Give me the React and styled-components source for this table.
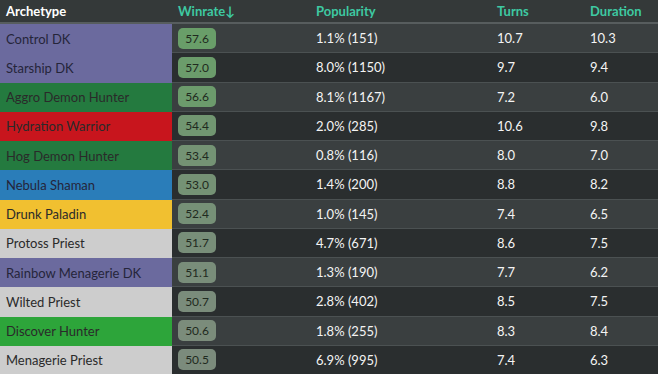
import styled, { createGlobalStyle } from "styled-components";

const GlobalStyle = createGlobalStyle`
    body {
        margin: 0;
        background: #2b2f30;
        font-family: Lato, "Open Sans", sans-serif;
    }
`

const Table = styled.div`
    width: 658px;
    height: 374px;
    overflow: hidden;
    background: #2b2f30;
    display: flex;
    flex-direction: column;
`

const Row = styled.div`
    display: grid;
    grid-template-columns: 172px 138px 181px 93px 74px;
    height: 29.25px;
    flex-shrink: 0;
    background: ${p => p.$odd ? '#3a3f40' : '#2a2e2f'};
    color: #f4f4f4;
    font-size: 13px;
`

const HeadRow = styled(Row)`
    height: 24px;
    box-sizing: border-box;
    background: #343939;
    border-bottom: 2px solid #575d5e;
    font-weight: 700;
`

const Cell = styled.div`
    display: flex;
    align-items: center;
    padding-left: 6px;
    white-space: nowrap;
    box-sizing: border-box;
    border-bottom: 1px solid #4b5152;
`

const HeadCell = styled.div`
    display: flex;
    align-items: center;
    padding-left: 6px;
    padding-bottom: 1px;
    color: ${p => p.$main ? '#ffffff' : '#3ec9a2'};
`

const NameCell = styled(Cell)`
    border-bottom: none;
    background: ${p => p.$color};
    color: ${p => p.$dark ? '#25253a' : '#2a2a2a'};
`

const Badge = styled.span`
    display: inline-flex;
    align-items: center;
    justify-content: center;
    width: 38px;
    height: 21px;
    border-radius: 5px;
    font-size: 12px;
    color: #1f2a20;
    background: ${p => p.$bg};
`

const classColors = {
    dk: '#6b6a9e',
    dh: '#247a3f',
    warrior: '#c8151d',
    shaman: '#2a7db9',
    paladin: '#f1c030',
    priest: '#cdcdcd',
    hunter: '#2da53a',
}

const rows = [
    ['Control DK', 'dk', 57.6, '1.1% (151)', '10.7', '10.3'],
    ['Starship DK', 'dk', 57.0, '8.0% (1150)', '9.7', '9.4'],
    ['Aggro Demon Hunter', 'dh', 56.6, '8.1% (1167)', '7.2', '6.0'],
    ['Hydration Warrior', 'warrior', 54.4, '2.0% (285)', '10.6', '9.8'],
    ['Hog Demon Hunter', 'dh', 53.4, '0.8% (116)', '8.0', '7.0'],
    ['Nebula Shaman', 'shaman', 53.0, '1.4% (200)', '8.8', '8.2'],
    ['Drunk Paladin', 'paladin', 52.4, '1.0% (145)', '7.4', '6.5'],
    ['Protoss Priest', 'priest', 51.7, '4.7% (671)', '8.6', '7.5'],
    ['Rainbow Menagerie DK', 'dk', 51.1, '1.3% (190)', '7.7', '6.2'],
    ['Wilted Priest', 'priest', 50.7, '2.8% (402)', '8.5', '7.5'],
    ['Discover Hunter', 'hunter', 50.6, '1.8% (255)', '8.3', '8.4'],
    ['Menagerie Priest', 'priest', 50.5, '6.9% (995)', '7.4', '6.3'],
]

// green for high winrates, fading to grey near 50%
function badgeColor(wr) {
    const t = Math.max(0, Math.min(1, (wr - 50) / 7.6))
    const from = [0x7c, 0x8a, 0x7d]
    const to = [0x69, 0x9e, 0x69]
    const c = from.map((v, i) => Math.round(v + (to[i] - v) * t))
    return `rgb(${c[0]}, ${c[1]}, ${c[2]})`
}

function App() {
    return (
        <>
            <GlobalStyle/>
            <Table>
                <HeadRow>
                    <HeadCell $main>Archetype</HeadCell>
                    <HeadCell>Winrate↓</HeadCell>
                    <HeadCell>Popularity</HeadCell>
                    <HeadCell>Turns</HeadCell>
                    <HeadCell>Duration</HeadCell>
                </HeadRow>
                {rows.map(([name, cls, wr, pop, turns, dur], i) => (
                    <Row key={name} $odd={i % 2 === 0}>
                        <NameCell $color={classColors[cls]} $dark={cls === 'dk' || cls === 'shaman'}>{name}</NameCell>
                        <Cell>
                            <Badge $bg={badgeColor(wr)}>{wr.toFixed(1)}</Badge>
                        </Cell>
                        <Cell>{pop}</Cell>
                        <Cell>{turns}</Cell>
                        <Cell>{dur}</Cell>
                    </Row>
                ))}
            </Table>
        </>
    );
}

export default App;
